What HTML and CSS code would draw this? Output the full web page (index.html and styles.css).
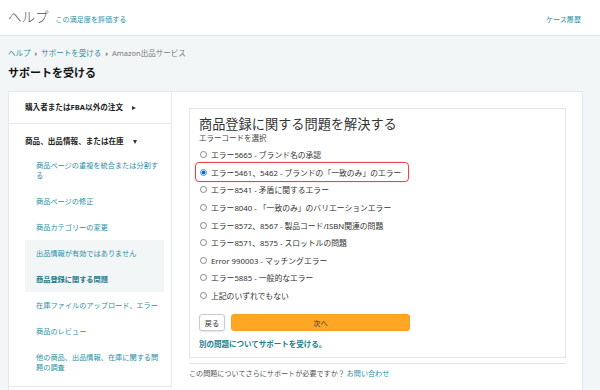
FILE: index.html
```html
<!DOCTYPE html>
<html lang="ja">
<head>
  <meta charset="UTF-8">
  <meta name="viewport" content="width=device-width, initial-scale=1.0">
  <title>サポートを受ける</title>
  <link rel="stylesheet" href="styles.css">
</head>

<body>
  <header class="topbar">
    <div class="brand">
      <span class="brand-name">ヘルプ</span>
      <a class="rate-link" href="#">この満足度を評価する</a>
    </div>
    <a class="case-link" href="#">ケース履歴</a>
  </header>

  <div class="page">
    <nav class="crumbs">
      <a href="#">ヘルプ</a><span class="sep">›</span><a href="#">サポートを受ける</a><span class="sep">›</span><span>Amazon出品サービス</span>
    </nav>
    <h1>サポートを受ける</h1>

    <div class="panel">
      <!-- left menu -->
      <aside class="sidebar">
        <div class="group-head closed">購入者またはFBA以外の注文</div>
        <div class="group-head open">商品、出品情報、または在庫</div>
        <ul class="sub-list">
          <li>商品ページの重複を統合または分割する</li>
          <li>商品ページの修正</li>
          <li>商品カテゴリーの変更</li>
          <li class="shaded">出品情報が有効ではありません</li>
          <li class="shaded current">商品登録に関する問題</li>
          <li>在庫ファイルのアップロード、エラー</li>
          <li>商品のレビュー</li>
          <li>他の商品、出品情報、在庫に関する問題の調査</li>
        </ul>
      </aside>

      <main class="content">
        <section class="card">
          <h2>商品登録に関する問題を解決する</h2>
          <div class="hint">エラーコードを選択</div>
          <div class="choices">
            <div class="choice"><span class="dot"></span>エラー5665 - ブランド名の承認</div>
            <div class="choice picked"><span class="dot"></span>エラー5461、5462 - ブランドの「一致のみ」のエラー</div>
            <div class="choice"><span class="dot"></span>エラー8541 - 矛盾に関するエラー</div>
            <div class="choice"><span class="dot"></span>エラー8040 - 「一致のみ」のバリエーションエラー</div>
            <div class="choice"><span class="dot"></span>エラー8572、8567 - 製品コード/ISBN関連の問題</div>
            <div class="choice"><span class="dot"></span>エラー8571、8575 - スロットルの問題</div>
            <div class="choice"><span class="dot"></span>Error 990003 - マッチングエラー</div>
            <div class="choice"><span class="dot"></span>エラー5885 - 一般的なエラー</div>
            <div class="choice"><span class="dot"></span>上記のいずれでもない</div>
          </div>
          <div class="actions">
            <button class="btn-back">戻る</button>
            <button class="btn-next">次へ</button>
          </div>
          <a class="other-link" href="#">別の問題についてサポートを受ける。</a>
        </section>
        <div class="rule"></div>
        <p class="more-help">この問題についてさらにサポートが必要ですか？ <a href="#">お問い合わせ</a></p>
      </main>
    </div>
  </div>
</body>

</html>
```

FILE: styles.css
```css
body {
  margin: 0;
  font-family: "Noto Sans", "Noto Sans CJK JP", sans-serif;
  background-color: #f3f6f7;
  color: #333;
  overflow: hidden;
}

a {
  color: #2b8fa3;
  text-decoration: none;
}

/* top bar */
.topbar {
  height: 35px;
  background: #fff;
  border-bottom: 1px solid #dde3e5;
  display: flex;
  align-items: center;
  justify-content: space-between;
  padding: 0 19px 0 8px;
}

.brand {
  display: flex;
  align-items: baseline;
  gap: 7px;
  margin-top: -3px;
}

.brand-name {
  font-size: 13.5px;
  font-weight: 300;
  color: #555;
}

.rate-link,
.case-link {
  font-size: 7.1px;
}

.case-link {
  margin-top: 3px;
}

/* page area */
.page {
  padding: 0 17px 0 8px;
}

.crumbs {
  margin-top: 11px;
  font-size: 7.5px;
  line-height: 12px;
  color: #777;

  .sep {
    margin: 0 4px;
    font-weight: bold;
    color: #666;
  }
}

h1 {
  margin: 7px 0 11px;
  font-size: 11px;
  line-height: 14px;
  color: #111;
}

.panel {
  background: #fff;
  border: 1px solid #e6e9eb;
  border-bottom: none;
  display: grid;
  grid-template-columns: 163px 1fr;
  min-height: 298px;
}

/* sidebar */
.sidebar {
  border-right: 1px solid #e6e9eb;
  padding-bottom: 6px;
  border-bottom: 1px solid #e6e9eb;
  align-self: start;
}

.group-head {
  font-size: 7.6px;
  font-weight: bold;
  color: #222;
  line-height: 10px;
  padding: 10px 0 11px 16px;
}

.group-head::after {
  content: "";
  display: inline-block;
  margin-left: 9px;
  vertical-align: middle;
  border-style: solid;
  border-color: transparent;
}

.group-head.closed {
  border-bottom: 1px solid #e6e9eb;
}

.group-head.closed::after {
  border-width: 2.5px 0 2.5px 4px;
  border-left-color: #333;
}

.group-head.open {
  padding: 12px 0 6px 16px;
}

.group-head.open::after {
  border-width: 4px 2.5px 0 2.5px;
  border-top-color: #333;
}

.sub-list {
  list-style: none;
  margin: 0 7px 0 16px;
  padding: 0;

  li {
    font-size: 7.2px;
    line-height: 10px;
    padding: 8px 4px 8px 11px;
    color: #2b8fa3;
  }

  .shaded {
    background: #f3f6f7;
  }

  .current {
    font-weight: bold;
    color: #1c7888;
  }
}

/* right side */
.content {
  padding: 16px 16px 0 17px;
}

.card {
  border: 1px solid #e3e6e8;
  padding: 7px 9px 8px;
}

h2 {
  margin: 0;
  font-size: 13.2px;
  font-weight: normal;
  line-height: 16px;
  color: #333;
}

.hint {
  margin-top: 1px;
  font-size: 7.5px;
  line-height: 10px;
  color: #444;
}

.choices {
  margin-top: 3px;
}

.choice {
  position: relative;
  display: flex;
  align-items: center;
  height: 17.6px;
  font-size: 7.8px;
  color: #333;
}

.dot {
  width: 7px;
  height: 7px;
  box-sizing: border-box;
  border: 1px solid #888;
  border-radius: 50%;
  margin: 0 4px 0 1px;
  background: #fff;
}

.picked .dot {
  border-color: #4a8be0;
  background: radial-gradient(circle, #1a66cc 0 1.8px, #fff 2.2px);
}

/* red marker round the chosen row */
.picked::after {
  content: "";
  position: absolute;
  left: -4px;
  top: -1.5px;
  width: 214px;
  height: 20px;
  box-sizing: border-box;
  border: 1.5px solid #e5434e;
  border-radius: 4px;
  box-shadow: 0 0 2px rgba(229, 67, 78, 0.35);
}

.actions {
  display: flex;
  gap: 6px;
  margin-top: 10px;
}

.actions button {
  height: 17px;
  border-radius: 3px;
  font-family: inherit;
  font-size: 7.2px;
  padding: 0;
  color: #333;
}

.btn-back {
  width: 26px;
  background: #fff;
  border: 1px solid #c9cdd0;
  box-shadow: 0 1px 2px rgba(0, 0, 0, 0.12);
}

.btn-next {
  width: 179px;
  background: #ffa624;
  border: 1px solid #f5a020;
  color: #5a3a00;
}

.other-link {
  display: block;
  margin-top: 8px;
  font-size: 7.5px;
  line-height: 10px;
  font-weight: bold;
  color: #1c7f90;
}

.rule {
  height: 1px;
  background: #e2e5e7;
  margin-top: 5px;
}

.more-help {
  margin: 4px 0 0;
  font-size: 7.1px;
  line-height: 10px;
  color: #555;
}
```
